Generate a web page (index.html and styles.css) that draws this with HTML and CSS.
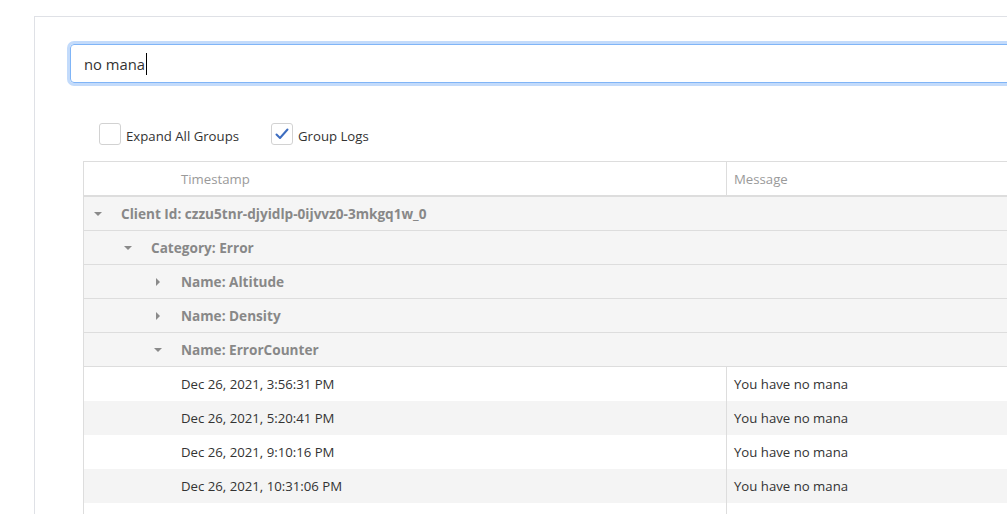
FILE: index.html
```html
<!DOCTYPE html>
<html>
<head>
<meta charset="utf-8">
<link rel="stylesheet" href="styles.css">
</head>
<body>
<div class="card">
  <div class="search-row">
    <div class="search-input"><span class="search-text">no mana</span><span class="caret"></span></div>
  </div>
  <div class="options">
    <label class="opt"><span class="box"></span><span class="opt-label">Expand All Groups</span></label>
    <label class="opt"><span class="box"><svg width="16" height="16" viewBox="0 0 16 16"><polyline points="2.5,8.5 6,12 13.5,3.5" fill="none" stroke="#3d6dc0" stroke-width="2" stroke-linecap="round" stroke-linejoin="round"/></svg></span><span class="opt-label">Group Logs</span></label>
  </div>
  <div class="grid">
    <div class="grid-header">
      <div class="cell cell-time">Timestamp</div>
      <div class="cell cell-msg">Message</div>
    </div>
    <div class="group-row lvl0"><span class="caret-down"></span><span class="group-text">Client Id: czzu5tnr-djyidlp-0ijvvz0-3mkgq1w_0</span></div>
    <div class="group-row lvl1"><span class="caret-down"></span><span class="group-text">Category: Error</span></div>
    <div class="group-row lvl2"><span class="caret-right"></span><span class="group-text">Name: Altitude</span></div>
    <div class="group-row lvl2"><span class="caret-right"></span><span class="group-text">Name: Density</span></div>
    <div class="group-row lvl2 last"><span class="caret-down"></span><span class="group-text">Name: ErrorCounter</span></div>
    <div class="data-row">
      <div class="cell cell-time">Dec 26, 2021, 3:56:31 PM</div>
      <div class="cell cell-msg">You have no mana</div>
    </div>
    <div class="data-row alt">
      <div class="cell cell-time">Dec 26, 2021, 5:20:41 PM</div>
      <div class="cell cell-msg">You have no mana</div>
    </div>
    <div class="data-row">
      <div class="cell cell-time">Dec 26, 2021, 9:10:16 PM</div>
      <div class="cell cell-msg">You have no mana</div>
    </div>
    <div class="data-row alt">
      <div class="cell cell-time">Dec 26, 2021, 10:31:06 PM</div>
      <div class="cell cell-msg">You have no mana</div>
    </div>
    <div class="data-row">
      <div class="cell cell-time"></div>
      <div class="cell cell-msg"></div>
    </div>
  </div>
</div>
</body>
</html>
```
FILE: styles.css
```css
html, body {
  margin: 0;
  padding: 0;
  background: #ffffff;
  overflow: hidden;
  width: 1007px;
  height: 514px;
}
body {
  font-family: "Open Sans", "Noto Sans", sans-serif;
  color: #333333;
}
.card {
  margin: 16px 0 0 34px;
  width: 973px;
  height: 498px;
  border-top: 1px solid #dfe1e6;
  border-left: 1px solid #dfe1e6;
  box-sizing: border-box;
  overflow: hidden;
}
.search-row {
  padding: 27px 0 0 35px;
}
.search-input {
  height: 39px;
  box-sizing: border-box;
  border: 1px solid #80b5f7;
  border-radius: 4px;
  box-shadow: 0 0 0 3px #c3dbfb;
  padding: 0 0 0 13px;
  display: flex;
  align-items: center;
  width: 1040px;
}
.search-text {
  font-size: 14.8px;
  color: #333333;
}
.caret {
  display: inline-block;
  width: 1px;
  height: 22px;
  background: #000;
  margin-left: 1px;
}
.options {
  display: flex;
  align-items: center;
  gap: 32px;
  padding: 40px 0 0 64px;
  height: 22px;
}
.opt {
  display: flex;
  align-items: center;
  gap: 5px;
}
.box {
  width: 22px;
  height: 22px;
  box-sizing: border-box;
  border: 1px solid #d2d2d2;
  border-radius: 3px;
  display: flex;
  align-items: center;
  justify-content: center;
}
.opt-label {
  font-size: 13.2px;
  color: #333333;
  margin-top: 3px;
}
.grid {
  margin: 16px 0 0 48px;
  width: 1000px;
  border-left: 1px solid #dddddd;
  border-top: 1px solid #dddddd;
  font-size: 13.2px;
}
.grid-header {
  display: flex;
  height: 33px;
  border-bottom: 2px solid #dddddd;
  color: #9a9a9a;
}
.cell {
  display: flex;
  align-items: center;
  box-sizing: border-box;
}
.cell-time {
  width: 642px;
  padding-left: 97px;
}
.cell-msg {
  flex: 1;
  border-left: 1px solid #dddddd;
  padding-left: 7px;
}
.group-row {
  height: 33px;
  background: #f5f5f5;
  border-bottom: 1px solid #dddddd;
  display: flex;
  align-items: center;
  font-weight: 700;
  font-size: 13.6px;
  color: #888888;
}
.group-text {
  margin-left: 19px;
}
.lvl0 { padding-left: 10px; }
.lvl1 { padding-left: 40px; }
.lvl2 { padding-left: 70px; }
.caret-down, .caret-right {
  display: inline-block;
  width: 8px;
  height: 8px;
  position: relative;
}
.caret-down::before {
  content: "";
  position: absolute;
  left: 0;
  top: 2px;
  border-left: 4px solid transparent;
  border-right: 4px solid transparent;
  border-top: 4px solid #8a8a8a;
}
.caret-right::before {
  content: "";
  position: absolute;
  left: 2px;
  top: 0;
  border-top: 4px solid transparent;
  border-bottom: 4px solid transparent;
  border-left: 4px solid #8a8a8a;
}
.data-row {
  display: flex;
  height: 34px;
  background: #ffffff;
}
.data-row.alt {
  background: #f4f4f4;
}
```
